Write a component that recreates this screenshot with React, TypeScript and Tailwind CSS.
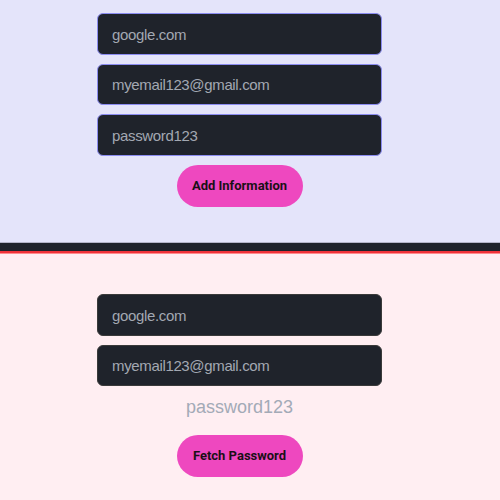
import React from 'react';

const Field: React.FC<{ value: string; tone: 'top' | 'bottom' }> = ({ value, tone }) => (
    <div
        className={`h-[41.5px] w-full rounded-md bg-[#1f232b] border flex items-center pl-[14px] pt-[2px] text-[15px] tracking-[-0.35px] text-[#a3a8b2] font-['Liberation_Sans',sans-serif] ${
            tone === 'top' ? 'border-[#8b8cf0]' : 'border-[#3a3a3a]'
        }`}
    >
        {value}
    </div>
);

const PinkButton: React.FC<{ label: string }> = ({ label }) => (
    <button className="h-[42px] w-[126px] rounded-full bg-[#ee48bf] text-[13px] font-bold text-[#1a1016] font-['Roboto',sans-serif] flex items-center justify-center">
        {label}
    </button>
);

const App: React.FC = () => {
    return (
        <div className="w-[500px] h-[500px] overflow-hidden font-['Liberation_Sans',sans-serif]">
            <div className="bg-[#e4e4fa] h-[242px] pt-[13px]">
                <div className="ml-[97px] w-[285px] flex flex-col items-center gap-[9px]">
                    <Field value="google.com" tone="top" />
                    <Field value="myemail123@gmail.com" tone="top" />
                    <Field value="password123" tone="top" />
                    <PinkButton label="Add Information" />
                </div>
            </div>
            <div className="h-[9px] bg-[#1f232b] border-t border-[#b4b4c8]" />
            <div className="h-[3px] bg-[#f0323a] border-b border-[#ff8a8e]" />
            <div className="bg-[#ffeef2] h-[246px] pt-[40px]">
                <div className="ml-[97px] w-[285px] flex flex-col items-center">
                    <div className="w-full flex flex-col gap-[9px]">
                        <Field value="google.com" tone="bottom" />
                        <Field value="myemail123@gmail.com" tone="bottom" />
                    </div>
                    <div className="mt-[10px] h-[22px] text-[18px] leading-[22px] text-[#a3aab7]">
                        password123
                    </div>
                    <div className="mt-[17px]">
                        <PinkButton label="Fetch Password" />
                    </div>
                </div>
            </div>
        </div>
    );
};

export default App;
